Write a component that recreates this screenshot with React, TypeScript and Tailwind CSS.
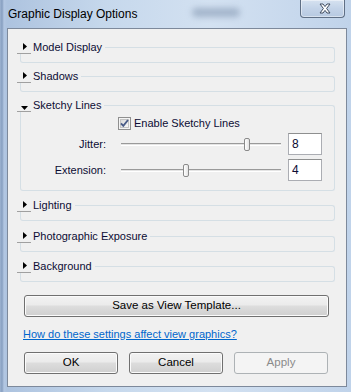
import React from "react";

const LINE = "border-[#d5dfe5]";

function Tri({ open }: { open: boolean }) {
  return open ? (
    <svg width="7" height="4" viewBox="0 0 7 4" className="mt-[6px]">
      <path d="M0 0H7L3.5 4Z" fill="#000" />
    </svg>
  ) : (
    <svg width="4" height="7" viewBox="0 0 4 7" className="ml-[1px]">
      <path d="M0 0L4 3.5L0 7Z" fill="#000" />
    </svg>
  );
}

function Group({
  title,
  open = false,
  className = "",
  children,
}: {
  title: string;
  open?: boolean;
  className?: string;
  children?: React.ReactNode;
}) {
  return (
    <div className={"flex flex-col " + className}>
      <div className="flex h-[14px]">
        <div className="w-[14px] h-[14px] border-b border-[#a0a0a0] flex items-center justify-center">
          <Tri open={open} />
        </div>
        <span className="ml-[2px] leading-[14px] text-[11px] text-[#0c0c34] whitespace-nowrap">
          {title}
        </span>
        <div className={"flex-1 ml-[3px] mt-[7px] border-t border-r rounded-tr-[3px] " + LINE} />
      </div>
      <div className={"ml-[3px] border-l border-r border-b rounded-b-[3px] min-h-[9px] " + LINE}>
        {children}
      </div>
    </div>
  );
}

function SliderRow({ label, value, className = "" }: { label: string; value: number; className?: string }) {
  return (
    <div className={"flex items-center h-[22px] " + className}>
      <div className="w-[85px] text-right text-[11px] text-[#0c0c34] leading-[14px]">{label}</div>
      <div className="relative ml-[15px] w-[160px] h-[22px] flex items-center">
        <div className="w-full h-[3px] border-t border-[#9a9a9a] border-b border-b-white bg-[#e4e4e4]" />
        <div
          className="absolute top-[5px] w-[6px] h-[13px] rounded-[2px] border border-[#8a8a8a] bg-[linear-gradient(90deg,#ffffff,#e3e3e3)]"
          style={{ left: `${1 + value * 15.25}px` }}
        />
      </div>
      <div className="ml-[7px] w-[34px] h-[22px] bg-white border border-[#abadb3] border-t-[#8e8f8f] flex items-center pl-[3px] text-[12px] text-[#0c0c34]">
        {value}
      </div>
    </div>
  );
}

function Btn({ children, disabled = false, className = "" }: { children: React.ReactNode; disabled?: boolean; className?: string }) {
  return (
    <div
      className={
        "h-[22px] rounded-[3px] border flex items-center justify-center text-[11.5px] " +
        (disabled
          ? "border-[#adb2b5] bg-[#f4f4f4] text-[#8a8a8a]"
          : "border-[#707070] bg-[linear-gradient(#f2f2f2_0%,#ebebeb_45%,#dddddd_50%,#cfcfcf_100%)] shadow-[inset_0_0_0_1px_#fbfbfb] text-black") +
        " " +
        className
      }
    >
      {children}
    </div>
  );
}

export default function App() {
  return (
    <div className="relative w-[351px] h-[392px] overflow-hidden flex flex-col font-['Liberation_Sans',Arial,sans-serif] bg-[linear-gradient(90deg,#9db3d1_0px,#879fc0_2px,#b3c7e2_4px,#adc3df_7px,#c6d8ec_30%,#d3e1f1_60%,#c0d3ea_100%)]">
      {/* blurred ghost behind glass */}
      <div className="absolute left-[192px] top-[8px] w-[48px] h-[9px] rounded-full bg-[#8ea1ba] blur-[3px] opacity-70" />
      {/* title bar */}
      <div className="relative h-[28px] flex items-start">
        <span className="ml-[8px] mt-[7px] text-[12px] leading-[15px] text-black whitespace-nowrap">
          Graphic Display Options
        </span>
        <div className="flex-1" />
        <div className="mr-[6px] w-[45px] h-[18px] rounded-b-[4px] border border-t-0 border-[#5f6f85] bg-[linear-gradient(#d6e2f0,#c3d3e8_50%,#b7c9e1)] shadow-[inset_0_0_0_1px_rgba(255,255,255,0.45)] flex items-center justify-center pl-[5px]">
          <svg width="12" height="11" viewBox="0 0 12 11">
            <path
              d="M1 1H4L6 3.6L8 1H11L7.6 5.5L11 10H8L6 7.4L4 10H1L4.4 5.5Z"
              fill="#ffffff"
              stroke="#3f4c60"
              strokeWidth="1"
              strokeLinejoin="round"
            />
          </svg>
        </div>
      </div>
      {/* client area */}
      <div className="ml-[7px] mr-[4px] mb-[5px] flex-1 bg-[#f0f0f0] border border-[#7d899b] flex flex-col">
        <div className="flex flex-col pl-[9px] pr-[11px] pt-[11px]">
          <Group title="Model Display" />
          <Group title="Shadows" className="mt-[6px]" />
          <Group title="Sketchy Lines" open className="mt-[6px]">
            <div className="flex flex-col pt-[5px] pb-[9px]">
              <div className="flex items-center h-[13px] pl-[97px]">
                <svg width="13" height="13" viewBox="0 0 13 13">
                  <defs>
                    <linearGradient id="cbg" x1="0" y1="0" x2="1" y2="1">
                      <stop offset="0" stopColor="#d8d8d8" />
                      <stop offset="1" stopColor="#fafafa" />
                    </linearGradient>
                  </defs>
                  <rect x="0.5" y="0.5" width="12" height="12" fill="#f4f4f4" stroke="#8f8f8f" />
                  <rect x="2.5" y="2.5" width="8" height="8" fill="url(#cbg)" stroke="#c4c4c4" />
                  <path d="M3 6.3L5.3 8.8L10 3" fill="none" stroke="#4a5c88" strokeWidth="1.9" />
                </svg>
                <span className="ml-[3px] text-[11px] leading-[13px] text-[#0c0c34] whitespace-nowrap">
                  Enable Sketchy Lines
                </span>
              </div>
              <SliderRow label="Jitter:" value={8} className="mt-[3px]" />
              <SliderRow label="Extension:" value={4} className="mt-[4px]" />
            </div>
          </Group>
          <Group title="Lighting" className="mt-[7px]" />
          <Group title="Photographic Exposure" className="mt-[8px]" />
          <Group title="Background" className="mt-[7px]" />
        </div>
        <div className="flex flex-col ml-[16px] mr-[17px] mt-[13px]">
          <Btn>Save as View Template...</Btn>
          <a className="mt-[10px] -ml-[1px] text-[11px] leading-[15px] text-[#0066cc] underline whitespace-nowrap">
            How do these settings affect view graphics?
          </a>
          <div className="flex gap-[11px] mt-[10px]">
            <Btn className="w-[94px]">OK</Btn>
            <Btn className="w-[94px]">Cancel</Btn>
            <Btn className="w-[94px]" disabled>
              Apply
            </Btn>
          </div>
        </div>
      </div>
    </div>
  );
}
